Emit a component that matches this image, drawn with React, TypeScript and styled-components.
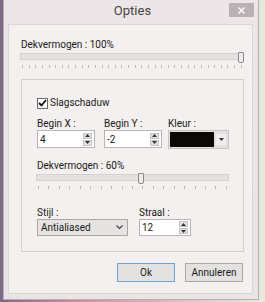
import React from 'react'
import styled, { createGlobalStyle } from 'styled-components'

const GlobalStyle = createGlobalStyle`
  html, body {
    margin: 0;
    padding: 0;
  }
  body {
    font-family: Roboto, 'Noto Sans', sans-serif;
    font-size: 10px;
    color: #1a1a1a;
  }
`

const Desktop = styled.div`
  width: 265px;
  height: 302px;
  overflow: hidden;
  background: linear-gradient(90deg, #7d6a86 0%, #c58fa2 30%, #d9c3c4 70%, #e4ebdc 100%);
`

const Window = styled.div`
  box-sizing: border-box;
  margin-left: 3px;
  width: 256px;
  height: 300px;
  display: flex;
  flex-direction: column;
  padding: 0 5px 5px 4px;
  border: 1px solid #b4aeb3;
  border-top: none;
  background: linear-gradient(180deg, #ece6e8 0%, #ebe4e5 100%);
`

const TitleBar = styled.div`
  position: relative;
  height: 24px;
  display: flex;
  align-items: center;
  justify-content: center;
  flex-shrink: 0;
`

const Title = styled.div`
  font-size: 13px;
  color: #444;
  margin-left: 4px;
  margin-top: -4px;
`

const CloseButton = styled.div`
  position: absolute;
  right: -1px;
  top: 3px;
  width: 25px;
  height: 14px;
  background: #bab1b2;
  display: flex;
  align-items: center;
  justify-content: center;
`

const Client = styled.div`
  flex: 1;
  box-sizing: border-box;
  background: #f4f0ef;
  border: 1px solid #dcd5d6;
  padding: 14px 9px 0 12px;
  display: flex;
  flex-direction: column;
`

const Label = styled.div`
  line-height: 12px;
  white-space: nowrap;
`

const SliderWrap = styled.div<{ $width: number }>`
  width: ${(p) => p.$width}px;
  margin-left: -1px;
  display: flex;
  flex-direction: column;
`

const Track = styled.div`
  position: relative;
  box-sizing: border-box;
  height: 7px;
  margin-top: 2px;
  background: #e5e2e1;
  border: 1px solid #d5d1d0;
`

const Thumb = styled.div`
  position: absolute;
  top: -2px;
  width: 4px;
  height: 9px;
  background: #edebeb;
  border: 1px solid #8e8a8a;
  border-radius: 0 0 2px 2px;
  transform: translateX(-50%);
`

const Ticks = styled.div`
  display: flex;
  justify-content: space-between;
  margin-top: 5px;
  padding: 0 2px;
`

const Tick = styled.div`
  width: 1px;
  height: 3px;
  background: #bdb9b8;
`

const GroupBox = styled.div`
  box-sizing: border-box;
  width: 223px;
  height: 173px;
  margin-top: 11px;
  border: 1px solid #d4cfcf;
  padding: 16px 0 0 15px;
  display: flex;
  flex-direction: column;
`

const CheckRow = styled.label`
  display: flex;
  align-items: center;
  gap: 2px;
  line-height: 14px;
`

const CheckBox = styled.div`
  box-sizing: border-box;
  width: 11px;
  height: 11px;
  border: 1px solid #6c6c6c;
  background: #fff;
  display: flex;
  align-items: center;
  justify-content: center;
`

const FieldRow = styled.div<{ $columns: string; $top: number }>`
  display: grid;
  grid-template-columns: ${(p) => p.$columns};
  margin-top: ${(p) => p.$top}px;
`

const Field = styled.div`
  display: flex;
  flex-direction: column;
`

const SpinBox = styled.div<{ $width: number; $height: number }>`
  box-sizing: border-box;
  width: ${(p) => p.$width}px;
  height: ${(p) => p.$height}px;
  background: #fff;
  border: 1px solid #b9b5b5;
  display: flex;
  align-items: center;
  padding-left: 2px;
`

const SpinValue = styled.span`
  flex: 1;
`

const SpinButtons = styled.div`
  display: flex;
  flex-direction: column;
  gap: 1px;
  margin-right: 2px;
`

const SpinButton = styled.div`
  width: 9px;
  height: 6px;
  background: #e2e0e0;
  border: 1px solid #c6c3c3;
  box-sizing: border-box;
  display: flex;
  align-items: center;
  justify-content: center;
`

const ColorPicker = styled.div`
  box-sizing: border-box;
  width: 61px;
  height: 19px;
  background: #e3e0e0;
  border: 1px solid #c8c4c4;
  display: flex;
  align-items: center;
  padding: 1px 2px 1px 1px;
  gap: 2px;
`

const Swatch = styled.div`
  width: 44px;
  height: 15px;
  background: #0d0808;
`

const DropButton = styled.div`
  flex: 1;
  height: 11px;
  background: #efeded;
  display: flex;
  align-items: center;
  justify-content: center;
`

const Select = styled.div`
  box-sizing: border-box;
  width: 91px;
  height: 17px;
  background: #e6e3e3;
  border: 1px solid #aaa6a6;
  display: flex;
  align-items: center;
  justify-content: space-between;
  padding: 0 4px 0 3px;
`

const ButtonBar = styled.div`
  display: flex;
  gap: 10px;
  margin-top: 11px;
  padding-left: 96px;
`

const Button = styled.div<{ $default?: boolean }>`
  box-sizing: border-box;
  width: 59px;
  height: 19px;
  display: flex;
  align-items: center;
  justify-content: center;
  background: #e4e1e1;
  border: 1px solid ${(p) => (p.$default ? '#6aa3d6' : '#aca8a8')};
`

const Arrow = ({ down }: { down?: boolean }) => (
  <svg width="5" height="3" viewBox="0 0 5 3">
    <path d={down ? 'M0 0 H5 L2.5 3 Z' : 'M0 3 H5 L2.5 0 Z'} fill="#333" />
  </svg>
)

function Slider({ width, value, ticks }: { width: number; value: number; ticks: number }) {
  return (
    <SliderWrap $width={width}>
      <Track>
        <Thumb style={{ left: `calc(${value}% - ${(value / 100) * 2}px)` }} />
      </Track>
      <Ticks>
        {Array.from({ length: ticks }).map((_, i) => (
          <Tick key={i} />
        ))}
      </Ticks>
    </SliderWrap>
  )
}

function Spin({ value, width, height }: { value: string; width: number; height: number }) {
  return (
    <SpinBox $width={width} $height={height}>
      <SpinValue>{value}</SpinValue>
      <SpinButtons>
        <SpinButton>
          <Arrow />
        </SpinButton>
        <SpinButton>
          <Arrow down />
        </SpinButton>
      </SpinButtons>
    </SpinBox>
  )
}

export default function App() {
  return (
    <Desktop>
      <GlobalStyle />
      <Window>
        <TitleBar>
          <Title>Opties</Title>
          <CloseButton>
            <svg width="7" height="7" viewBox="0 0 7 7">
              <path d="M0.5 0.5 L6.5 6.5 M6.5 0.5 L0.5 6.5" stroke="#fff" strokeWidth="1.4" />
            </svg>
          </CloseButton>
        </TitleBar>
        <Client>
          <Label>Dekvermogen : 100%</Label>
          <Slider width={224} value={100} ticks={34} />
          <GroupBox>
            <CheckRow>
              <CheckBox>
                <svg width="9" height="8" viewBox="0 0 9 8">
                  <path d="M1 4 L3.5 6.5 L8 1" stroke="#111" strokeWidth="1.8" fill="none" />
                </svg>
              </CheckBox>
              Slagschaduw
            </CheckRow>
            <FieldRow $columns="67px 64px auto" $top={8}>
              <Field>
                <Label>Begin X :</Label>
                <Spin value="4" width={58} height={18} />
              </Field>
              <Field>
                <Label>Begin Y :</Label>
                <Spin value="-2" width={58} height={18} />
              </Field>
              <Field>
                <Label>Kleur :</Label>
                <ColorPicker>
                  <Swatch />
                  <DropButton>
                    <Arrow down />
                  </DropButton>
                </ColorPicker>
              </Field>
            </FieldRow>
            <FieldRow $columns="auto" $top={11}>
              <Field>
                <Label>Dekvermogen : 60%</Label>
                <Slider width={193} value={55} ticks={19} />
              </Field>
            </FieldRow>
            <FieldRow $columns="102px auto" $top={18}>
              <Field>
                <Label>Stijl :</Label>
                <Select>
                  <span>Antialiased</span>
                  <svg width="7" height="5" viewBox="0 0 7 5">
                    <path d="M0.5 0.5 L3.5 3.5 L6.5 0.5" stroke="#444" strokeWidth="1.2" fill="none" />
                  </svg>
                </Select>
              </Field>
              <Field>
                <Label>Straal :</Label>
                <Spin value="12" width={52} height={17} />
              </Field>
            </FieldRow>
          </GroupBox>
          <ButtonBar>
            <Button $default>Ok</Button>
            <Button>Annuleren</Button>
          </ButtonBar>
        </Client>
      </Window>
    </Desktop>
  )
}
